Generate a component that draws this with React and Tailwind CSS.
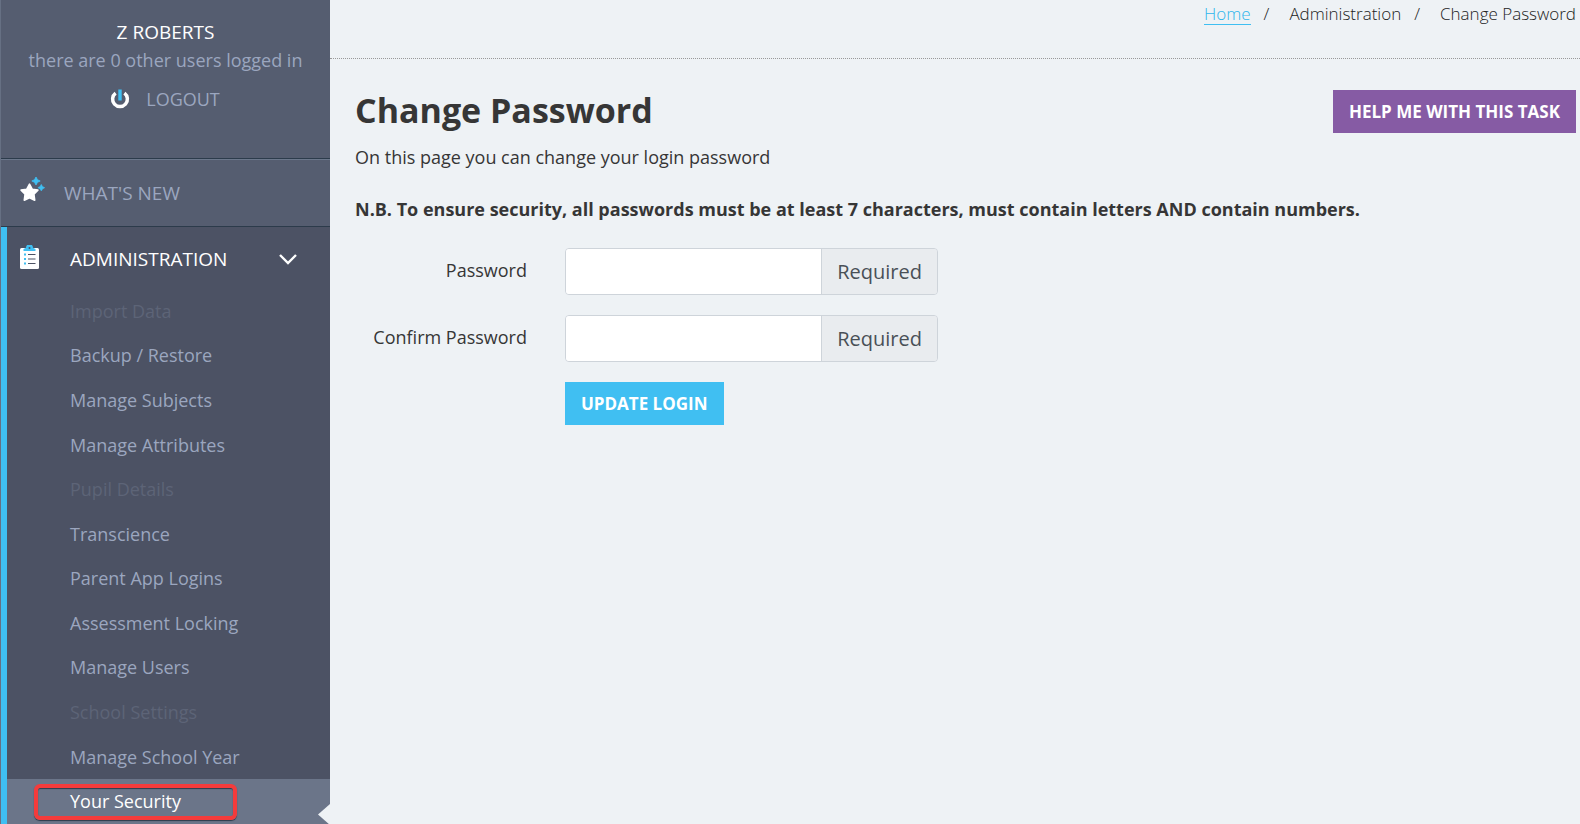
import React from "react";

const adminLinks = [
  { label: "Import Data", disabled: true },
  { label: "Backup / Restore" },
  { label: "Manage Subjects" },
  { label: "Manage Attributes" },
  { label: "Pupil Details", disabled: true },
  { label: "Transcience" },
  { label: "Parent App Logins" },
  { label: "Assessment Locking" },
  { label: "Manage Users" },
  { label: "School Settings", disabled: true },
  { label: "Manage School Year" },
  { label: "Your Security", active: true },
];

function PowerIcon() {
  return (
    <svg className="size-5" viewBox="0 0 20 20" fill="none" aria-hidden="true">
      <path d="M5.600 4.200A7.400 7.400 0 1 0 14.400 4.200" stroke="#fff" strokeWidth="3.500" />
      <path d="M10 .500v11" stroke="#3fbff2" strokeWidth="3.400" />
    </svg>
  );
}

function StarIcon() {
  return (
    <svg className="h-6 w-[25px]" viewBox="0 0 25 24" aria-hidden="true">
      <path
        d="M9.5 7.200l2.700 5 5.700.900-4 4.100.800 6-5.200-2.500-5.200 2.500.800-6-4-4.100 5.700-.900z"
        fill="#fff"
        stroke="#fff"
        strokeWidth="1.600"
        strokeLinejoin="round"
      />
      <path d="M16 0l1.500 2.700 2.700 1.300-2.700 1.300L16 8l-1.500-2.700L11.800 4l2.700-1.300z" fill="#3fbff2" stroke="#3fbff2" strokeWidth=".8" />
      <path d="M21.300 7.400l1.200 2.100 2.200 1.200-2.200 1.200-1.200 2.100-1.200-2.100-2.200-1.200 2.200-1.200z" fill="#3fbff2" stroke="#3fbff2" strokeWidth=".6" />
    </svg>
  );
}

function ClipboardIcon() {
  return (
    <svg className="h-6 w-5" viewBox="0 0 20 24" aria-hidden="true">
      <rect x="0" y="3" width="19" height="21" rx="1.5" fill="#fff" />
      <path d="M3.500 6V4l2.500-1.200A3.400 3.400 0 0 1 13 2.800L15.500 4v2z" fill="#3fbff2" />
      <circle cx="9.5" cy="3" r="1" fill="#4c5264" />
      <path d="M4 8.500h2v2h-2zM4 13h2v2h-2zM4 17.500h2v2h-2z" fill="#3fbff2" />
      <path d="M8 9.500h7.500M8 14h7.500M8 18.500h7.500" stroke="#4c5264" strokeWidth="1.2" />
    </svg>
  );
}

function Sidebar() {
  return (
    <aside className="flex w-[330px] shrink-0 flex-col border-l border-[#667083] bg-[#555d70] text-[#9ba6bf]">
      <div className="flex h-[159px] flex-col items-center border-b border-[#2c3b4b] pt-[18px] text-lg leading-7">
        <div className="text-[19px] text-white">Z ROBERTS</div>
        <div>there are 0 other users logged in</div>
        <a href="#logout" className="mt-[11px] flex items-center gap-4 pr-px">
          <PowerIcon />
          LOGOUT
        </a>
      </div>
      <nav className="flex flex-1 flex-col" aria-label="Main">
        <a
          href="#new"
          className="flex h-17 items-center gap-[19px] border-t border-b border-t-[#6b778b] border-b-[#2c3b4b] pl-[19px] text-[19px]"
        >
          <span className="pb-2">
            <StarIcon />
          </span>
          WHAT'S NEW
        </a>
        <div className="flex flex-1 flex-col border-l-6 border-[#3fbff2] bg-[#4c5264]">
          <button
            type="button"
            aria-expanded="true"
            className="flex h-[62px] items-center pt-[2px] pr-8 pl-[13px] text-left text-[19px] text-white"
          >
            <span className="mr-[30px] pb-1">
              <ClipboardIcon />
            </span>
            ADMINISTRATION
            <svg className="ml-auto h-3 w-5" viewBox="0 0 20 12" fill="none" aria-hidden="true">
              <path d="M2 2l8 8 8-8" stroke="#fff" strokeWidth="2.400" />
            </svg>
          </button>
          <ul className="grid flex-1 auto-rows-fr text-lg leading-7">
            {adminLinks.map(({ label, disabled, active }) =>
              active ? (
                <li key={label} className="relative flex items-center overflow-hidden bg-[#6b7589] pl-[27px] text-white">
                  <a
                    href="#security"
                    aria-current="page"
                    className="h-9 w-[203px] rounded-md border-4 border-[#f43b3b] pl-8 leading-[26px] shadow-[inset_0_1px_1px_#2c3b4b,0_1px_1px_#2c3b4b]"
                  >
                    {label}
                  </a>
                  <svg className="absolute right-0 bottom-0 h-5 w-3" viewBox="0 0 12 20" aria-hidden="true">
                    <path d="M12 0L0 10.500 12 21z" fill="#eef2f5" />
                  </svg>
                </li>
              ) : (
                <li key={label} className="flex items-center pb-px pl-[63px]">
                  {disabled ? <span className="text-[#5d6477]">{label}</span> : <a href="#admin">{label}</a>}
                </li>
              )
            )}
          </ul>
        </div>
      </nav>
    </aside>
  );
}

function Field({ id, label }) {
  return (
    <div className="flex items-center">
      <label htmlFor={id} className="w-[172px] pb-1 text-right text-lg">
        {label}
      </label>
      <div className="ml-[38px] flex h-[47px] w-[373px] overflow-hidden rounded border border-[#ced4da]">
        <input id={id} type="password" className="min-w-0 flex-1 bg-white px-3 text-xl outline-none" />
        <span className="flex items-center border-l border-[#ced4da] bg-[#e9ecef] px-[15px] text-xl text-[#495057]">
          Required
        </span>
      </div>
    </div>
  );
}

export default function App() {
  return (
    <div className="flex min-h-screen bg-[#eef2f5] font-['Open_Sans',sans-serif] text-[#363636]">
      <Sidebar />
      <div className="min-w-0 flex-1">
        <nav aria-label="Breadcrumb" className="h-[59px] border-b border-dotted border-[#999] pr-1">
          <ol className="flex justify-end text-[17px] leading-7 font-light text-[#222]">
            <li>
              <a href="#home" className="inline-block h-[25px] border-b border-[#3fbff2] text-[#2fb5ec]">
                Home
              </a>
            </li>
            <li>
              <span className="mr-5 ml-[13px]">/</span>Administration
            </li>
            <li>
              <span className="mr-5 ml-[13px]">/</span>Change Password
            </li>
          </ol>
        </nav>
        <main className="pt-[31px] pr-1 pl-[25px]">
          <div className="flex items-start justify-between">
            <h1 className="text-[34px] leading-10 font-bold">Change Password</h1>
            <button type="button" className="h-[43px] bg-[#865ba4] px-4 text-[17px] font-bold text-white">
              HELP ME WITH THIS TASK
            </button>
          </div>
          <p className="mt-3 text-lg leading-6">On this page you can change your login password</p>
          <p className="mt-7 text-lg leading-6 font-bold">
            N.B. To ensure security, all passwords must be at least 7 characters, must contain letters AND contain
            numbers.
          </p>
          <form className="mt-[27px] flex flex-col gap-5" onSubmit={(e) => e.preventDefault()}>
            <Field id="password" label="Password" />
            <Field id="confirm" label="Confirm Password" />
            <button
              type="submit"
              className="ml-[210px] h-[43px] self-start bg-[#40bff2] px-4 text-[17px] font-bold text-white"
            >
              UPDATE LOGIN
            </button>
          </form>
        </main>
      </div>
    </div>
  );
}
